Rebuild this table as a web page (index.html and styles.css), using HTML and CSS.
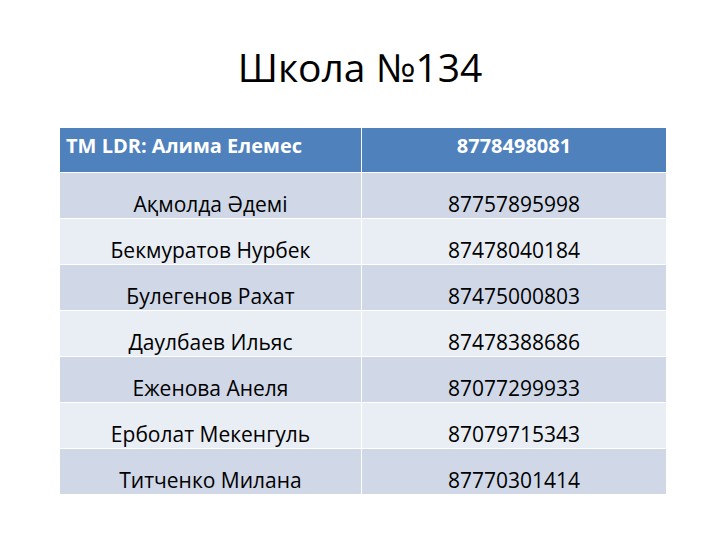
FILE: index.html
```html
<!DOCTYPE html>
<html lang="ru">
<head>
<meta charset="utf-8">
<title>Школа №134</title>
<link rel="stylesheet" href="styles.css">
</head>
<body>
<div class="slide">
  <h1 class="title">Школа №134</h1>
  <div class="table">
    <div class="cell head left">TM LDR: Алима Елемес</div>
    <div class="cell head">8778498081</div>
    <div class="cell odd">Ақмолда Әдемі</div>
    <div class="cell odd">87757895998</div>
    <div class="cell even">Бекмуратов Нурбек</div>
    <div class="cell even">87478040184</div>
    <div class="cell odd">Булегенов Рахат</div>
    <div class="cell odd">87475000803</div>
    <div class="cell even">Даулбаев Ильяс</div>
    <div class="cell even">87478388686</div>
    <div class="cell odd">Еженова Анеля</div>
    <div class="cell odd">87077299933</div>
    <div class="cell even">Ерболат Мекенгуль</div>
    <div class="cell even">87079715343</div>
    <div class="cell odd">Титченко Милана</div>
    <div class="cell odd">87770301414</div>
  </div>
</div>
</body>
</html>
```
FILE: styles.css
```css
html, body {
  margin: 0;
  padding: 0;
  background: #ffffff;
}
.slide {
  width: 720px;
  height: 540px;
  font-family: "Open Sans", "Noto Sans", sans-serif;
  color: #000;
}
.title {
  margin: 0;
  padding-top: 47px;
  height: 40px;
  line-height: 40px;
  font-size: 39px;
  font-weight: 400;
  text-align: center;
}
.table {
  margin: 41px 0 0 60px;
  width: 606px;
  display: grid;
  grid-template-columns: 301px 304px;
  grid-template-rows: 44px repeat(7, 45px);
  column-gap: 1px;
  row-gap: 1px;
  background: #ffffff;
}
.cell {
  font-size: 21px;
  line-height: 25px;
  padding-top: 19px;
  box-sizing: border-box;
  text-align: center;
  white-space: nowrap;
}
.head {
  background: #4f81bd;
  color: #ffffff;
  font-weight: 700;
  font-size: 20px;
  padding-top: 5px;
}
.head.left {
  text-align: left;
  padding-left: 6px;
}
.odd {
  background: #d0d8e8;
}
.even {
  background: #e9edf4;
}
```
